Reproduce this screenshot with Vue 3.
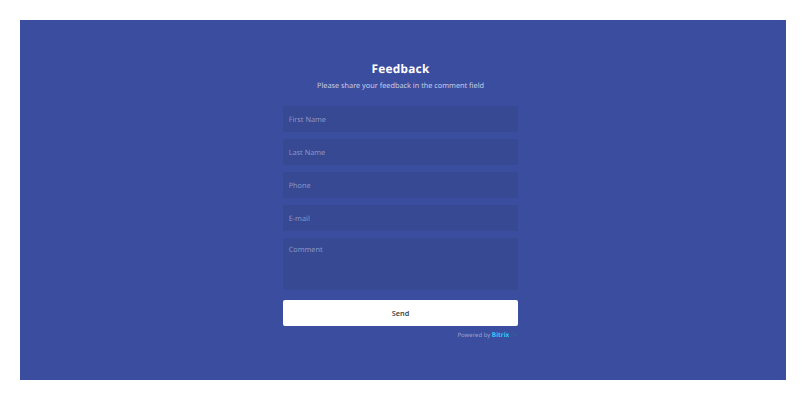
<script setup>
const fields = ['First Name', 'Last Name', 'Phone', 'E-mail']
</script>

<template>
  <main class="page">
    <section class="panel">
      <form class="form" @submit.prevent>
        <h1 class="title">Feedback</h1>
        <p class="subtitle">Please share your feedback in the comment field</p>
        <div v-for="f in fields" :key="f" class="field">{{ f }}</div>
        <div class="field comment">Comment</div>
        <button class="send" type="submit">Send</button>
        <div class="powered">Powered by <b class="brand">Bitrix</b><span class="suffix">24</span></div>
      </form>
    </section>
  </main>
</template>

<style>
body { background: #fff; }
</style>

<style scoped>
.page {
  box-sizing: border-box;
  height: 400px;
  padding: 20px 21px 20px 20px;
  font-family: "Noto Sans", "Open Sans", sans-serif;
  text-rendering: geometricPrecision;
}
.panel {
  height: 360px;
  background: #3a4d9f;
  display: flex;
  justify-content: center;
}
.form {
  width: 235px;
  padding-top: 39px;
  padding-right: 5px;
  display: flex;
  flex-direction: column;
}
.title {
  margin: 0;
  font-size: 11.8px;
  line-height: 20px;
  font-weight: 700;
  letter-spacing: 0.25px;
  text-align: center;
  color: #fff;
}
.subtitle {
  margin: 0 0 12.4px;
  font-size: 7.32px;
  line-height: 15px;
  text-align: center;
  color: #c8cde5;
}
.field {
  box-sizing: border-box;
  height: 25.8px;
  margin-bottom: 7px;
  padding-left: 5.7px;
  font-size: 7.3px;
  line-height: 28px;
  color: #8c96c5;
  background: #374993;
  border-radius: 2px;
}
.comment {
  height: 52px;
  margin-bottom: 10.5px;
  line-height: 24px;
}
.send {
  height: 26px;
  padding: 0;
  border: 0;
  border-radius: 2px;
  background: #fff;
  color: #444;
  font: 600 7.3px/27px "Noto Sans", "Open Sans", sans-serif;
}
.powered {
  padding: 3px 0.3px 0 0;
  font-size: 6px;
  line-height: 12px;
  text-align: right;
  color: #98a2cc;
}
.brand { font-size: 6.5px; letter-spacing: -0.05px; color: #2fc6f6; }
.suffix { margin-left: 1px; font-size: 6.5px; color: #32609c; }
</style>
